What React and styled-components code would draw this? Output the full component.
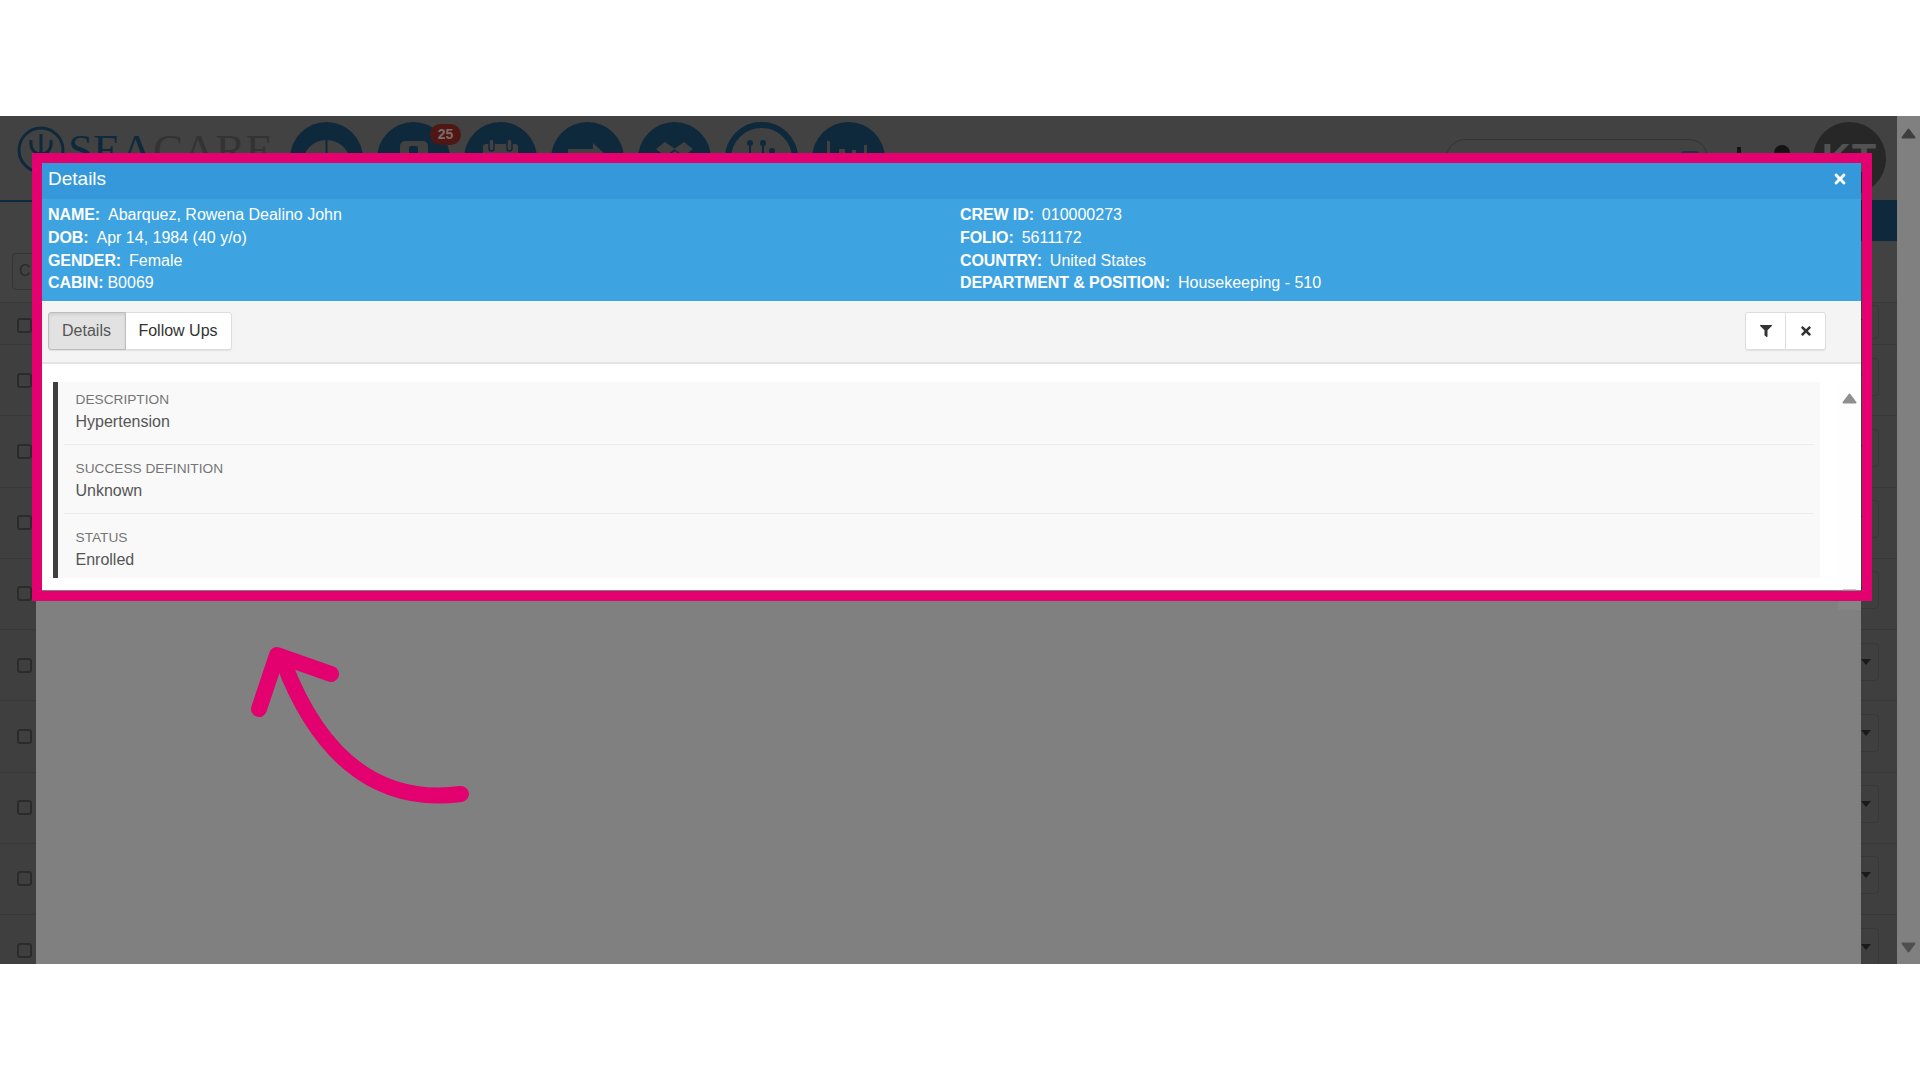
import React from "react";
import styled, { createGlobalStyle } from "styled-components";
import { FaFilter, FaTimes } from "react-icons/fa";

const PINK = "#e3006f";
const NAVY = "#0f293c";
const DIM = "#424242";

const GlobalStyle = createGlobalStyle`
  html, body { margin: 0; padding: 0; background: #fff; }
  body { font-family: "Liberation Sans", Arial, sans-serif; }
  * { box-sizing: border-box; }
`;

const Page = styled.div`
  width: 1920px;
  height: 1080px;
  padding-top: 116px;
  background: #fff;
  overflow: hidden;
`;

const Screen = styled.div`
  position: relative;
  display: flex;
  height: 848px;
  overflow: hidden;
  background: ${DIM};
`;

/* dimmed app behind the popup */
const Main = styled.div`
  flex: 1;
  min-width: 0;
  display: flex;
  flex-direction: column;
  overflow: hidden;
`;

const TopBar = styled.div`
  height: 84px;
  flex: none;
  display: flex;
  padding: 6px 11px 0 17px;
  & > * { flex: none; }
`;

const Logo = styled.div`
  width: 273px;
  display: flex;
  align-items: flex-start;
  gap: 3px;
`;

const LogoMark = styled.svg`
  width: 48px;
  height: 56px;
  margin-top: 4px;
  flex: none;
`;

const LogoText = styled.div`
  font-family: "Liberation Serif", serif;
  font-size: 45px;
  line-height: 50px;
  margin-top: 3px;
  color: #333;
  white-space: nowrap;
  span { color: ${NAVY}; }
`;

const NavIcons = styled.div`
  display: flex;
  gap: 14px;
`;

const NavItem = styled.div`
  position: relative;
  width: 73px;
  height: 73px;
`;

const Badge = styled.span`
  position: absolute;
  top: 2px;
  right: -11px;
  width: 31px;
  height: 21px;
  border-radius: 10.5px;
  background: #4f1713;
  color: #7d6b69;
  font-size: 14px;
  font-weight: 700;
  line-height: 21px;
  text-align: center;
`;

const Search = styled.div`
  width: 262px;
  height: 38px;
  margin: 17px 0 0 561px;
  padding: 10px 8px 0 36px;
  display: flex;
  justify-content: space-between;
  border: 1px solid #333;
  border-radius: 19px;
  color: #2b2b2b;
  font-size: 15px;
  line-height: 24px;
`;

const SearchSquare = styled.i`
  width: 18px;
  height: 18px;
  margin-top: 1px;
  border: 2px solid #1e3446;
  border-radius: 3px;
`;

const TopGlyph = styled.div`
  width: ${(p) => p.$box}px;
  margin: ${(p) => p.$top}px 0 0 ${(p) => p.$left}px;
  height: 20px;
  display: flex;
  justify-content: center;
  i {
    display: block;
    width: ${(p) => p.$size}px;
    height: 20px;
    background: #141414;
    border-radius: ${(p) => (p.$size > 5 ? "8px 8px 0 0" : "0")};
  }
`;

const Avatar = styled.div`
  width: 73px;
  height: 73px;
  margin-left: 13px;
  border-radius: 50%;
  background: #272727;
  color: #525252;
  font-size: 40px;
  font-weight: 700;
  line-height: 73px;
  text-align: center;
  letter-spacing: 1px;
`;

const SubBar = styled.div`
  height: 41px;
  flex: none;
  display: flex;
  justify-content: flex-end;
  border-top: 2px solid ${NAVY};
`;

const SubBarBlock = styled.div`
  width: 36px;
  margin-top: -2px;
  background: ${NAVY};
`;

const FilterBar = styled.div`
  height: 61px;
  flex: none;
  padding: 12px 0 0 12px;
`;

const FilterInput = styled.div`
  width: 120px;
  height: 37px;
  border: 1px solid #333;
  border-radius: 4px;
  padding: 8px 0 0 6px;
  color: #2a2a2a;
`;

const Row = styled.div`
  height: ${(p) => (p.$short ? "42px" : "71.25px")};
  flex: none;
  display: flex;
  align-items: center;
  justify-content: space-between;
  padding: ${(p) => (p.$short ? "3px" : "0")} 18px 0 17px;
  border-top: 1px solid #383838;
  background: #3f3f3f;
`;

const Check = styled.span`
  width: 15px;
  height: 15px;
  border: 2px solid #2b2b2b;
  border-radius: 3px;
`;

const RowMenu = styled.div`
  width: 70px;
  height: ${(p) => (p.$short ? "34px" : "38px")};
  margin-bottom: ${(p) => (p.$short ? "6px" : "7px")};
  padding-right: 7px;
  display: flex;
  align-items: center;
  justify-content: flex-end;
  border: 1px solid #383838;
  border-radius: 4px;
  &::after {
    content: "";
    border-top: 6px solid #1a1a1a;
    border-left: 5px solid transparent;
    border-right: 5px solid transparent;
  }
`;

const PageScroll = styled.div`
  width: 23px;
  flex: none;
  display: flex;
  flex-direction: column;
  justify-content: space-between;
  align-items: center;
  padding: 12px 0 11px;
  background: #808080;
`;

const Arrow = styled.svg`
  display: block;
  width: 15px;
  height: 11px;
  flex: none;
  transform: ${(p) => (p.$down ? "rotate(180deg)" : "none")};
`;

/* popup */
const Backdrop = styled.div`
  position: absolute;
  left: 36px;
  top: 47px;
  bottom: 0;
  width: 1825px;
  background: #808080;
`;

const Modal = styled.div`
  position: relative;
  width: 1819px;
  margin-left: 6px;
  height: 427px;
  background: #fff;
  color: #fff;
`;

const ModalTitle = styled.div`
  height: 36px;
  padding: 0 13px 5px 6px;
  display: flex;
  align-items: center;
  justify-content: space-between;
  background: #3498db;
  font-size: 19px;
`;

const Info = styled.div`
  height: 102px;
  padding: 5px 6px 0;
  display: grid;
  grid-template-columns: 912px 1fr;
  background: #3da3e1;
  font-size: 16px;
  line-height: 22.8px;
`;

const InfoCol = styled.div`
  min-width: 0;
`;

const InfoLine = styled.div`
  white-space: nowrap;
  b {
    letter-spacing: -0.1px;
    margin-right: ${(p) => (p.$tight ? "4px" : "8px")};
  }
`;

const Toolbar = styled.div`
  height: 63px;
  padding: 11px 35px 0 5.5px;
  display: flex;
  justify-content: space-between;
  align-items: flex-start;
  background: #f4f4f4;
  border-bottom: 2px solid #e4e4e4;
`;

const BtnGroup = styled.div`
  display: flex;
  border-radius: 3px;
  box-shadow: 0 1px 1px rgba(0, 0, 0, 0.08);
`;

const GroupBtn = styled.div`
  width: ${(p) => p.$w}px;
  height: 38px;
  display: flex;
  align-items: center;
  justify-content: center;
  margin-left: -1px;
  font-size: 16px;
  background: ${(p) => (p.$active ? "#e2e2e2" : "#fff")};
  border: 1px solid ${(p) => (p.$active ? "#bdbdbd" : "#ddd")};
  box-shadow: ${(p) => (p.$active ? "inset 0 2px 3px rgba(0,0,0,.08)" : "none")};
  color: ${(p) => (p.$active ? "#555" : "#333")};
  z-index: ${(p) => (p.$active ? 1 : 0)};
  &:first-child { margin-left: 0; border-radius: 3px 0 0 3px; }
  &:last-child { border-radius: 0 3px 3px 0; }
`;

const ModalBody = styled.div`
  position: relative;
  padding: 18px 0 0 11px;
`;

const Card = styled.div`
  width: 1767px;
  padding: 0 6px;
  background: #f9f9f9;
  border-left: 5px solid #3f3f3f;
`;

const Field = styled.div`
  padding: 15px 11.5px 11px;
  border-bottom: 1px solid #ececec;
  &:first-child { padding-top: 9px; }
  &:last-child { padding-bottom: 7px; border-bottom: 0; }
`;

const FieldLabel = styled.div`
  font-size: 13.7px;
  line-height: 18px;
  color: #757575;
`;

const FieldValue = styled.div`
  margin-top: 2px;
  font-size: 16px;
  line-height: 22px;
  color: #555;
`;

const BodyScroll = styled.div`
  position: absolute;
  top: 16px;
  right: 0;
  width: 23px;
  height: 230px;
  padding: 13px 0 10px;
  display: flex;
  flex-direction: column;
  align-items: center;
  justify-content: space-between;
  background: rgba(240, 240, 240, 0.05);
`;

/* tutorial markup on top of the screenshot */
const Highlight = styled.div`
  position: absolute;
  left: 32px;
  top: 37px;
  width: 1840px;
  height: 448px;
  border: 10px solid ${PINK};
  pointer-events: none;
`;

const PointerArrow = styled.svg`
  position: absolute;
  left: 240px;
  top: 521px;
  width: 240px;
  height: 300px;
`;

const TriangleUp = ({ color, down }) => (
  <Arrow viewBox="0 0 15 11" $down={down}>
    <path d="M7.5 1.5 L13.5 9.5 H1.5 Z" fill={color} stroke={color} strokeWidth="2" strokeLinejoin="round" />
  </Arrow>
);

const light = "#414141";
const navIcons = [
  <>
    <circle cx="36.5" cy="42" r="24" fill={light} />
    <rect x="35.5" y="16" width="2" height="20" fill={NAVY} />
  </>,
  <>
    <rect x="23" y="19" width="28" height="30" rx="5" fill={light} />
    <rect x="32" y="24" width="9" height="20" rx="2" fill={NAVY} />
  </>,
  <>
    <rect x="19" y="22" width="35" height="26" rx="3" fill={light} />
    <rect x="25" y="17" width="5" height="12" rx="2.5" fill={light} stroke={NAVY} strokeWidth="1.5" />
    <rect x="43" y="17" width="5" height="12" rx="2.5" fill={light} stroke={NAVY} strokeWidth="1.5" />
  </>,
  <>
    <rect x="17" y="27" width="30" height="14" fill={light} />
    <path d="M42 21 L58 36 L42 48 Z" fill={light} />
  </>,
  <>
    <path d="M27 20 L37 27 L27 34 L18 27 Z M46 20 L55 27 L46 34 L36 27 Z" fill={light} />
    <path d="M27 36 L37 29 L46 36 L37 43 Z" fill={light} />
  </>,
  <>
    <circle cx="36.5" cy="36.5" r="33.5" fill={light} stroke={NAVY} strokeWidth="6" />
    <circle cx="25" cy="21" r="3" fill={NAVY} />
    <circle cx="38" cy="21" r="3" fill={NAVY} />
    <circle cx="47" cy="29" r="3" fill={NAVY} />
    <path d="M25 23 V34 M38 23 V34 L44 36" stroke={NAVY} strokeWidth="2" fill="none" />
  </>,
  <>
    <rect x="15" y="19" width="3" height="34" fill={light} />
    <rect x="27" y="27" width="6" height="26" fill={light} />
    <rect x="40" y="28" width="4" height="25" fill={light} />
    <rect x="52" y="23" width="3" height="30" fill={light} />
  </>,
];

const leftInfo = [
  ["NAME:", "Abarquez, Rowena Dealino John"],
  ["DOB:", "Apr 14, 1984 (40 y/o)"],
  ["GENDER:", "Female"],
  ["CABIN:", "B0069", true],
];

const rightInfo = [
  ["CREW ID:", "010000273"],
  ["FOLIO:", "5611172"],
  ["COUNTRY:", "United States"],
  ["DEPARTMENT & POSITION:", "Housekeeping - 510"],
];

const fields = [
  ["DESCRIPTION", "Hypertension"],
  ["SUCCESS DEFINITION", "Unknown"],
  ["STATUS", "Enrolled"],
];

const rows = [0, 1, 2, 3, 4, 5, 6, 7, 8, 9];

export default function App() {
  return (
    <Page>
      <GlobalStyle />
      <Screen>
        <Main>
          <TopBar>
            <Logo>
              <LogoMark viewBox="0 0 48 56" fill="none" stroke={NAVY} strokeWidth="3">
                <circle cx="24" cy="24" r="22" />
                <path d="M24 8 V50 M14 14 C13 24 18 28 24 28 C30 28 35 24 34 14" />
              </LogoMark>
              <LogoText><span>SEA</span>CARE</LogoText>
            </Logo>
            <NavIcons>
              {navIcons.map((icon, i) => (
                <NavItem key={i}>
                  <svg width="73" height="73" viewBox="0 0 73 73">
                    <circle cx="36.5" cy="36.5" r="36.5" fill={NAVY} />
                    {icon}
                  </svg>
                  {i === 1 && <Badge>25</Badge>}
                </NavItem>
              ))}
            </NavIcons>
            <Search>
              Search patient
              <SearchSquare />
            </Search>
            <TopGlyph $box={18} $left={22} $top={25} $size={4}><i /></TopGlyph>
            <TopGlyph $box={36} $left={16} $top={23} $size={16}><i /></TopGlyph>
            <Avatar>KT</Avatar>
          </TopBar>
          <SubBar><SubBarBlock /></SubBar>
          <FilterBar><FilterInput>C</FilterInput></FilterBar>
          {rows.map((r) => (
            <Row key={r} $short={r === 0}>
              <Check />
              <RowMenu $short={r === 0} />
            </Row>
          ))}
        </Main>
        <PageScroll>
          <TriangleUp color="#3f3f3f" />
          <TriangleUp color="#4f4f4f" down />
        </PageScroll>

        <Backdrop>
          <Modal>
            <ModalTitle>
              Details
              <FaTimes size={16} />
            </ModalTitle>
            <Info>
              <InfoCol>
                {leftInfo.map(([label, value, tight]) => (
                  <InfoLine key={label} $tight={tight}><b>{label}</b>{value}</InfoLine>
                ))}
              </InfoCol>
              <InfoCol>
                {rightInfo.map(([label, value]) => (
                  <InfoLine key={label}><b>{label}</b>{value}</InfoLine>
                ))}
              </InfoCol>
            </Info>
            <Toolbar>
              <BtnGroup>
                <GroupBtn $w={78} $active>Details</GroupBtn>
                <GroupBtn $w={107}>Follow Ups</GroupBtn>
              </BtnGroup>
              <BtnGroup>
                <GroupBtn $w={41}><FaFilter size={12} /></GroupBtn>
                <GroupBtn $w={41}><FaTimes size={14} /></GroupBtn>
              </BtnGroup>
            </Toolbar>
            <ModalBody>
              <Card>
                {fields.map(([label, value]) => (
                  <Field key={label}>
                    <FieldLabel>{label}</FieldLabel>
                    <FieldValue>{value}</FieldValue>
                  </Field>
                ))}
              </Card>
              <BodyScroll>
                <TriangleUp color="#8f8f8f" />
                <TriangleUp color="#8f8f8f" down />
              </BodyScroll>
            </ModalBody>
          </Modal>
        </Backdrop>

        <Highlight />
        <PointerArrow viewBox="240 636 240 300" fill="none" stroke={PINK} strokeWidth="16" strokeLinecap="round" strokeLinejoin="round">
          <path d="M259 708 L277 654 L331 673" />
          <path d="M283 660 C 315 745, 370 805, 461 793" />
        </PointerArrow>
      </Screen>
    </Page>
  );
}
